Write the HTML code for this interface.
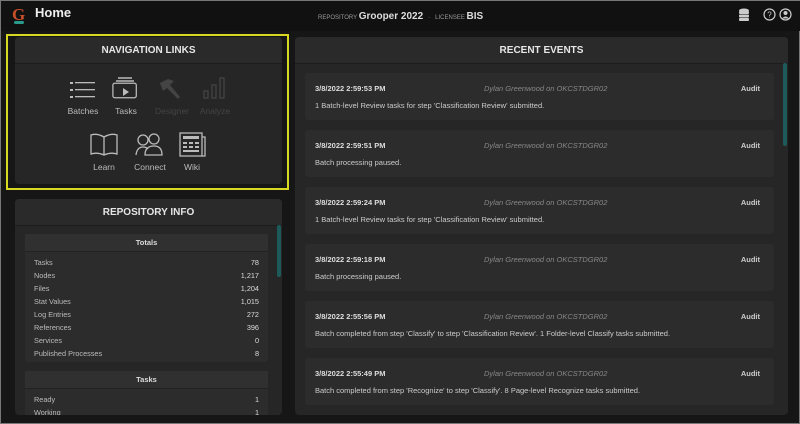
<!DOCTYPE html><html><head><style>
*{margin:0;padding:0;box-sizing:border-box}
body{width:800px;height:424px;background:#161616;font-family:"Liberation Sans",sans-serif;color:#ddd;position:relative;overflow:hidden;border:1px solid #777}
.a{position:absolute}
.panel{position:absolute;background:#262626;border-radius:4px;overflow:hidden}
.ph{height:27px;background:#2a2a2a;border-bottom:1px solid #1c1c1c;text-align:center;font-weight:bold;font-size:10px;line-height:27px;color:#e6e6e6}
.ic{position:absolute;text-align:center;font-size:8.5px;color:#bbb;width:44px}
.ev{position:absolute;left:10px;width:469px;height:47px;background:#2c2c2c;border-radius:3px;font-size:7.5px;color:#ccc}
.ev b{position:absolute;left:10px;top:11px;color:#ddd}
.ev i{position:absolute;left:179px;top:11px;color:#888}
.ev u{position:absolute;right:14px;top:11px;text-decoration:none;font-weight:bold;color:#ccc}
.ev span{position:absolute;left:10px;top:28px}
.sub{position:absolute;left:10px;width:243px;background:#2c2c2c;border-radius:3px}
.sub .h{height:18px;background:#303030;border-bottom:1px solid #222;text-align:center;font-weight:bold;font-size:7.5px;line-height:18px}
.row{display:flex;justify-content:space-between;padding:0 9px;font-size:7.3px;height:13px;line-height:13px;color:#bbb}
.row b{color:#ddd;font-weight:normal}
</style></head><body>
<div class="a" style="left:0;top:0;width:800px;height:30px;background:#111"></div>
<div class="a" style="left:11px;top:4px;font-family:'Liberation Serif',serif;font-size:17px;color:#c8502a;font-weight:bold">G</div>
<div class="a" style="left:13px;top:20px;width:10px;height:3px;background:#2a9a8a;border-radius:2px"></div>
<div class="a" style="left:34px;top:4px;font-size:13px;font-weight:bold;color:#eee">Home</div>
<div class="a" style="left:317px;top:10px;font-size:6px;color:#999">REPOSITORY <span style="font-size:10px;font-weight:bold;color:#ddd">Grooper 2022</span> &nbsp; · &nbsp; LICENSEE <span style="font-size:10px;font-weight:bold;color:#ddd">BIS</span></div>
<svg class="a" style="left:737px;top:7px" width="12" height="13" viewBox="0 0 12 13"><ellipse cx="6" cy="2.5" rx="5" ry="2" fill="#ccc"/><rect x="1" y="3" width="10" height="3" fill="#ccc" rx="1"/><rect x="1" y="6.5" width="10" height="3" fill="#ccc" rx="1"/><rect x="1" y="10" width="10" height="3" fill="#ccc" rx="1"/></svg>
<svg class="a" style="left:762px;top:7px" width="30" height="13" viewBox="0 0 30 13"><circle cx="6.5" cy="6.5" r="5.5" fill="none" stroke="#ccc" stroke-width="1.2"/><text x="6.5" y="9.5" font-size="8" fill="#ccc" text-anchor="middle" font-family="Liberation Sans">?</text><circle cx="22.5" cy="6.5" r="5.5" fill="none" stroke="#ccc" stroke-width="1.2"/><circle cx="22.5" cy="5" r="2" fill="#ccc"/><path d="M19 10.5q3.5-4 7 0" fill="#ccc"/></svg>

<div class="panel" style="left:14px;top:36px;width:267px;height:147px">
<div class="ph">NAVIGATION LINKS</div>
<svg class="a" style="left:55px;top:43px" width="26" height="20"><g fill="#bbb"><rect x="0" y="2" width="3" height="2"/><rect x="5" y="2" width="20" height="1.3"/><rect x="0" y="9" width="3" height="2"/><rect x="5" y="9" width="20" height="1.3"/><rect x="0" y="16" width="3" height="2"/><rect x="5" y="16" width="20" height="1.3"/></g></svg>
<svg class="a" style="left:97px;top:40px" width="26" height="24"><g fill="none" stroke="#bbb" stroke-width="1.4"><path d="M6 1h14M4 4h18"/><rect x="1" y="7" width="26" height="16" rx="2" transform="scale(.9)"/></g><path d="M11 11v8l6-4z" fill="#bbb"/></svg>
<svg class="a" style="left:142px;top:40px" width="26" height="24"><path d="M3 6l8-4 6 2-4 4 10 12-2 2-11-11-4 3z" fill="#444"/></svg>
<svg class="a" style="left:187px;top:39px" width="24" height="24"><g fill="none" stroke="#444" stroke-width="1.3"><rect x="2" y="15" width="4" height="7"/><rect x="10" y="9" width="4" height="13"/><rect x="18" y="2" width="4" height="20"/></g></svg>
<div class="ic" style="left:46px;top:69px">Batches</div>
<div class="ic" style="left:89px;top:69px">Tasks</div>
<div class="ic" style="left:135px;top:69px;color:#444">Designer</div>
<div class="ic" style="left:178px;top:69px;color:#444">Analyze</div>
<svg class="a" style="left:75px;top:96px" width="28" height="24"><path d="M1 2q6-2 13 2q7-4 13-2v19q-6-2-13 1q-7-3-13-1zM14 4v18" fill="none" stroke="#bbb" stroke-width="1.3"/></svg>
<svg class="a" style="left:120px;top:96px" width="28" height="24"><g fill="none" stroke="#bbb" stroke-width="1.3"><circle cx="8" cy="7" r="5"/><circle cx="19" cy="6" r="5"/><path d="M1 22q1-8 7-8 3 0 5 2M10 22q0-9 9-9 8 0 8 9z"/></g></svg>
<svg class="a" style="left:164px;top:95px" width="28" height="26"><g fill="none" stroke="#bbb" stroke-width="1.3"><rect x="1" y="1" width="22" height="23"/><path d="M23 5h3v19h-3"/></g><g fill="#bbb"><rect x="4" y="4" width="16" height="3"/><rect x="4" y="10" width="4" height="2"/><rect x="10" y="10" width="4" height="2"/><rect x="16" y="10" width="4" height="2"/><rect x="4" y="14" width="4" height="2"/><rect x="10" y="14" width="4" height="2"/><rect x="16" y="14" width="4" height="2"/><rect x="4" y="18" width="16" height="2"/></g></svg>
<div class="ic" style="left:67px;top:125px">Learn</div>
<div class="ic" style="left:113px;top:125px">Connect</div>
<div class="ic" style="left:155px;top:125px">Wiki</div>
</div>
<div class="a" style="left:5px;top:33px;width:283px;height:156px;border:2px solid #d8d820"></div>

<div class="panel" style="left:14px;top:198px;width:267px;height:216px">
<div class="ph">REPOSITORY INFO</div>
<div class="sub" style="top:35px;height:128px"><div class="h">Totals</div><div style="height:4px"></div>
<div class="row">Tasks<b>78</b></div><div class="row">Nodes<b>1,217</b></div><div class="row">Files<b>1,204</b></div><div class="row">Stat Values<b>1,015</b></div><div class="row">Log Entries<b>272</b></div><div class="row">References<b>396</b></div><div class="row">Services<b>0</b></div><div class="row">Published Processes<b>8</b></div></div>
<div class="sub" style="top:172px;height:50px"><div class="h">Tasks</div><div style="height:4px"></div><div class="row">Ready<b>1</b></div><div class="row">Working<b>1</b></div></div>
<div class="a" style="left:262px;top:26px;width:4px;height:52px;background:#1d5a5a;border-radius:2px"></div>
</div>

<div class="panel" style="left:294px;top:36px;width:493px;height:378px">
<div class="ph">RECENT EVENTS</div>
<div class="ev" style="top:36px"><b>3/8/2022 2:59:53 PM</b><i>Dylan Greenwood on OKCSTDGR02</i><u>Audit</u><span>1 Batch-level Review tasks for step 'Classification Review' submitted.</span></div>
<div class="ev" style="top:93px"><b>3/8/2022 2:59:51 PM</b><i>Dylan Greenwood on OKCSTDGR02</i><u>Audit</u><span>Batch processing paused.</span></div>
<div class="ev" style="top:150px"><b>3/8/2022 2:59:24 PM</b><i>Dylan Greenwood on OKCSTDGR02</i><u>Audit</u><span>1 Batch-level Review tasks for step 'Classification Review' submitted.</span></div>
<div class="ev" style="top:207px"><b>3/8/2022 2:59:18 PM</b><i>Dylan Greenwood on OKCSTDGR02</i><u>Audit</u><span>Batch processing paused.</span></div>
<div class="ev" style="top:264px"><b>3/8/2022 2:55:56 PM</b><i>Dylan Greenwood on OKCSTDGR02</i><u>Audit</u><span>Batch completed from step 'Classify' to step 'Classification Review'. 1 Folder-level Classify tasks submitted.</span></div>
<div class="ev" style="top:321px"><b>3/8/2022 2:55:49 PM</b><i>Dylan Greenwood on OKCSTDGR02</i><u>Audit</u><span>Batch completed from step 'Recognize' to step 'Classify'. 8 Page-level Recognize tasks submitted.</span></div>
<div class="a" style="left:488px;top:26px;width:4px;height:83px;background:#1d5a5a;border-radius:2px"></div>
</div>
</body></html>
